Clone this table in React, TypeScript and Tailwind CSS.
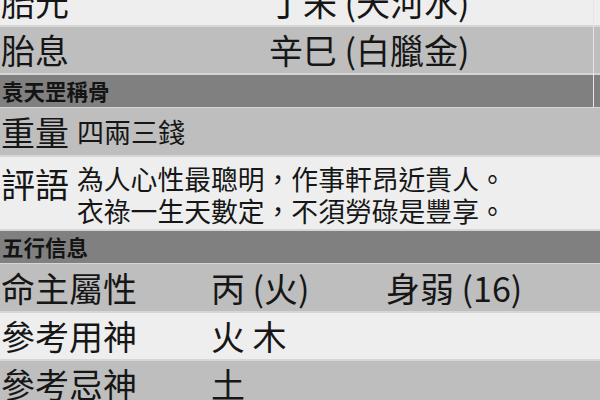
import React from "react";

const font = {
  fontFamily: '"Noto Sans CJK TC", "Noto Sans CJK SC", "Noto Sans", sans-serif',
};

type RowProps = {
  tone: "light" | "mid";
  className?: string;
  children: React.ReactNode;
};

function Row({ tone, className = "", children }: RowProps) {
  const bg = tone === "light" ? "bg-[#eeeeee]" : "bg-[#bebebe]";
  return (
    <div className={`flex items-center ${bg} ${className}`}>{children}</div>
  );
}

function Header({ title }: { title: string }) {
  return (
    <div className="flex h-[32px] items-center bg-[#808080] pl-[2px] text-[21.5px] font-bold leading-none text-[#141414]">
      {title}
    </div>
  );
}

export default function App() {
  return (
    <div
      className="relative h-[400px] w-[600px] overflow-hidden bg-[#d6d6d6] text-[#161616]"
      style={font}
    >
      <div className="-mt-[21px] flex flex-col gap-[2px]">
        {/* 胎元 / 胎息 */}
        <Row tone="light" className="h-[46px] text-[34px] leading-none">
          <span className="w-[269px] pl-[1px]">胎元</span>
          <span>丁未 (天河水)</span>
        </Row>
        <Row tone="mid" className="h-[46px] text-[34px] leading-none">
          <span className="w-[269px] pl-[1px]">胎息</span>
          <span>辛巳 (白臘金)</span>
        </Row>
        <Header title="袁天罡稱骨" />

        {/* 重量 / 評語 */}
        <Row tone="mid" className="mt-[-1px] h-[47px] leading-none">
          <span className="w-[77px] pl-[1px] text-[34px]">重量</span>
          <span className="text-[27px]">四兩三錢</span>
        </Row>
        <Row tone="light" className="h-[72px] items-start">
          <span className="mt-[10px] w-[77px] pl-[1px] text-[34px] leading-none">
            評語
          </span>
          <div className="mt-[6px] flex flex-col text-[26.8px] leading-[32px]">
            <span>為人心性最聰明，作事軒昂近貴人。</span>
            <span>衣祿一生天數定，不須勞碌是豐享。</span>
          </div>
        </Row>
        <Header title="五行信息" />

        {/* 五行 */}
        <Row tone="mid" className="mt-[-1px] h-[47px] text-[34px] leading-none">
          <span className="w-[211px] pl-[1px]">命主屬性</span>
          <span className="w-[175px]">丙 (火)</span>
          <span>身弱 (16)</span>
        </Row>
        <Row tone="light" className="h-[46px] text-[34px] leading-none">
          <span className="w-[211px] pl-[1px]">參考用神</span>
          <span>火 木</span>
        </Row>
        <Row tone="mid" className="h-[46px] text-[34px] leading-none">
          <span className="w-[211px] pl-[1px]">參考忌神</span>
          <span>土</span>
        </Row>
      </div>

      {/* card edge overlay on the top section */}
      <div className="pointer-events-none absolute right-[6px] top-0 h-[108px] w-[2px] rounded-br-[3px] border-r border-[#e6e6e6]" />
    </div>
  );
}
